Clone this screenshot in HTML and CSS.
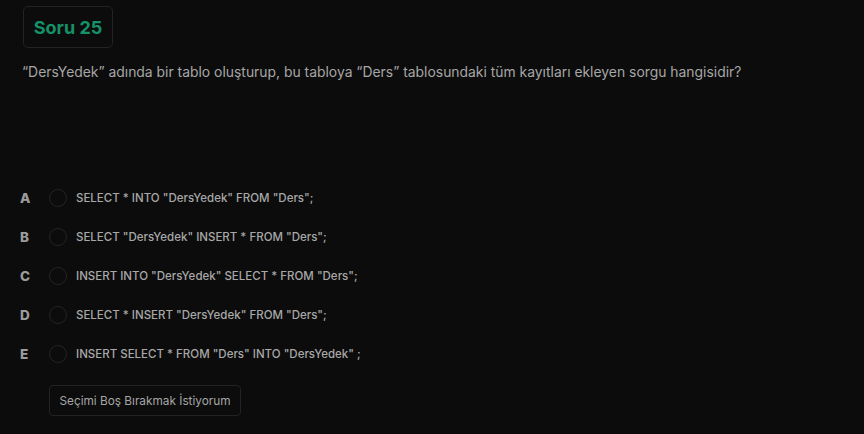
FILE: index.html
```html
<!DOCTYPE html>
<html lang="tr">
<head>
<meta charset="utf-8">
<title>Soru 25</title>
<link rel="stylesheet" href="styles.css">
</head>
<body>
<main class="page">
  <div class="badge">Soru 25</div>
  <p class="question">“DersYedek” adında bir tablo oluşturup, bu tabloya “Ders” tablosundaki tüm kayıtları ekleyen sorgu hangisidir?</p>
  <ul class="options">
    <li class="option"><span class="letter">A</span><span class="radio"></span><span class="text">SELECT * INTO "DersYedek" FROM "Ders";</span></li>
    <li class="option"><span class="letter">B</span><span class="radio"></span><span class="text">SELECT "DersYedek" INSERT * FROM "Ders";</span></li>
    <li class="option"><span class="letter">C</span><span class="radio"></span><span class="text">INSERT INTO "DersYedek" SELECT * FROM "Ders";</span></li>
    <li class="option"><span class="letter">D</span><span class="radio"></span><span class="text">SELECT * INSERT "DersYedek" FROM "Ders";</span></li>
    <li class="option"><span class="letter">E</span><span class="radio"></span><span class="text">INSERT SELECT * FROM "Ders" INTO "DersYedek" ;</span></li>
  </ul>
  <button class="skip" type="button">Seçimi Boş Bırakmak İstiyorum</button>
</main>
</body>
</html>
```

FILE: styles.css
```css
html, body {
  margin: 0;
  padding: 0;
  background: #0c0c0c;
  height: 100%;
}
body {
  font-family: "Inter", "Noto Sans", sans-serif;
  color: #a9a9a9;
}
.page {
  padding: 6px 0 0 0;
}
.badge {
  margin-left: 23px;
  width: 90px;
  height: 42px;
  box-sizing: border-box;
  border: 1px solid #232323;
  border-radius: 5px;
  display: flex;
  align-items: center;
  justify-content: center;
  color: #149268;
  font-weight: 700;
  font-size: 18px;
}
.question {
  margin: 15px 0 0 22px;
  font-size: 13.9px;
  line-height: 18px;
  color: #a6a6a6;
}
.options {
  list-style: none;
  margin: 108px 0 0 0;
  padding: 0;
  display: flex;
  flex-direction: column;
  gap: 21px;
}
.option {
  display: flex;
  align-items: center;
  height: 18px;
}
.letter {
  width: 29px;
  padding-left: 20px;
  box-sizing: content-box;
  font-weight: 800;
  font-size: 13.5px;
  color: #9c9c9c;
}
.radio {
  width: 18px;
  height: 18px;
  box-sizing: border-box;
  border: 1px solid #242424;
  border-radius: 50%;
  margin-right: 9px;
}
.text {
  font-size: 11.5px;
  font-weight: 500;
  color: #a8a8a8;
}
.skip {
  margin: 22px 0 0 49px;
  width: 192px;
  height: 31px;
  background: transparent;
  border: 1px solid #232323;
  border-radius: 4px;
  color: #a6a6a6;
  font-family: inherit;
  font-size: 11.8px;
  padding: 0;
}
```
